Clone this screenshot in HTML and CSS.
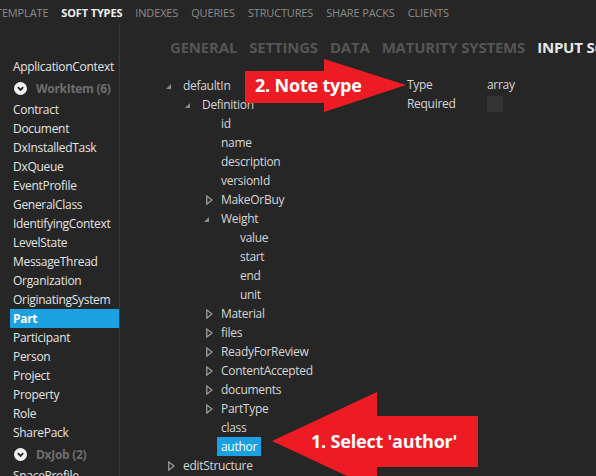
FILE: index.html
```html
<!DOCTYPE html>
<html>
<head>
<meta charset="utf-8">
<link rel="stylesheet" href="styles.css">
</head>
<body>
<div class="app">
  <nav class="topnav">
    <span class="tn">TEMPLATE</span>
    <span class="tn active">SOFT TYPES</span>
    <span class="tn">INDEXES</span>
    <span class="tn">QUERIES</span>
    <span class="tn">STRUCTURES</span>
    <span class="tn">SHARE PACKS</span>
    <span class="tn">CLIENTS</span>
  </nav>
  <div class="main">
    <aside class="sidebar">
      <div class="si">ApplicationContext</div>
      <div class="group"><span class="gicon"><svg width="13" height="13" viewBox="0 0 13 13"><circle cx="6.5" cy="6.5" r="6.5" fill="#f2f2f2"/><path d="M3.8 5.2 L6.5 7.9 L9.2 5.2" fill="none" stroke="#262626" stroke-width="1.8"/></svg></span>WorkItem (6)</div>
      <div class="si">Contract</div>
      <div class="si">Document</div>
      <div class="si">DxInstalledTask</div>
      <div class="si">DxQueue</div>
      <div class="si">EventProfile</div>
      <div class="si">GeneralClass</div>
      <div class="si">IdentifyingContext</div>
      <div class="si">LevelState</div>
      <div class="si">MessageThread</div>
      <div class="si">Organization</div>
      <div class="si">OriginatingSystem</div>
      <div class="si selected">Part</div>
      <div class="si">Participant</div>
      <div class="si">Person</div>
      <div class="si">Project</div>
      <div class="si">Property</div>
      <div class="si">Role</div>
      <div class="si">SharePack</div>
      <div class="group"><span class="gicon"><svg width="13" height="13" viewBox="0 0 13 13"><circle cx="6.5" cy="6.5" r="6.5" fill="#f2f2f2"/><path d="M3.8 5.2 L6.5 7.9 L9.2 5.2" fill="none" stroke="#262626" stroke-width="1.8"/></svg></span>DxJob (2)</div>
      <div class="si">SpaceProfile</div>
    </aside>
    <section class="content">
      <nav class="subnav">
        <span class="sn">GENERAL</span>
        <span class="sn">SETTINGS</span>
        <span class="sn">DATA</span>
        <span class="sn">MATURITY SYSTEMS</span>
        <span class="sn active">INPUT SCHEMA</span>
      </nav>
      <div class="body">
        <div class="tree">
          <div class="row l0"><span class="tg exp"><svg width="5" height="5" viewBox="0 0 5 5"><polygon points="5,0 5,5 0,5" fill="#8a8a8a"/></svg></span><span class="lb">defaultIn</span></div>
          <div class="row l1"><span class="tg exp"><svg width="5" height="5" viewBox="0 0 5 5"><polygon points="5,0 5,5 0,5" fill="#8a8a8a"/></svg></span><span class="lb">Definition</span></div>
          <div class="row l2"><span class="tg"></span><span class="lb">id</span></div>
          <div class="row l2"><span class="tg"></span><span class="lb">name</span></div>
          <div class="row l2"><span class="tg"></span><span class="lb">description</span></div>
          <div class="row l2"><span class="tg"></span><span class="lb">versionId</span></div>
          <div class="row l2"><span class="tg col"><svg width="7" height="10" viewBox="0 0 7 10"><path d="M0.75 0.9 L6 5 L0.75 9.1 Z" fill="none" stroke="#9a9a9a" stroke-width="1.3"/></svg></span><span class="lb">MakeOrBuy</span></div>
          <div class="row l2"><span class="tg exp"><svg width="5" height="5" viewBox="0 0 5 5"><polygon points="5,0 5,5 0,5" fill="#8a8a8a"/></svg></span><span class="lb">Weight</span></div>
          <div class="row l3"><span class="tg"></span><span class="lb">value</span></div>
          <div class="row l3"><span class="tg"></span><span class="lb">start</span></div>
          <div class="row l3"><span class="tg"></span><span class="lb">end</span></div>
          <div class="row l3"><span class="tg"></span><span class="lb">unit</span></div>
          <div class="row l2"><span class="tg col"><svg width="7" height="10" viewBox="0 0 7 10"><path d="M0.75 0.9 L6 5 L0.75 9.1 Z" fill="none" stroke="#9a9a9a" stroke-width="1.3"/></svg></span><span class="lb">Material</span></div>
          <div class="row l2"><span class="tg col"><svg width="7" height="10" viewBox="0 0 7 10"><path d="M0.75 0.9 L6 5 L0.75 9.1 Z" fill="none" stroke="#9a9a9a" stroke-width="1.3"/></svg></span><span class="lb">files</span></div>
          <div class="row l2"><span class="tg col"><svg width="7" height="10" viewBox="0 0 7 10"><path d="M0.75 0.9 L6 5 L0.75 9.1 Z" fill="none" stroke="#9a9a9a" stroke-width="1.3"/></svg></span><span class="lb">ReadyForReview</span></div>
          <div class="row l2"><span class="tg col"><svg width="7" height="10" viewBox="0 0 7 10"><path d="M0.75 0.9 L6 5 L0.75 9.1 Z" fill="none" stroke="#9a9a9a" stroke-width="1.3"/></svg></span><span class="lb">ContentAccepted</span></div>
          <div class="row l2"><span class="tg col"><svg width="7" height="10" viewBox="0 0 7 10"><path d="M0.75 0.9 L6 5 L0.75 9.1 Z" fill="none" stroke="#9a9a9a" stroke-width="1.3"/></svg></span><span class="lb">documents</span></div>
          <div class="row l2"><span class="tg col"><svg width="7" height="10" viewBox="0 0 7 10"><path d="M0.75 0.9 L6 5 L0.75 9.1 Z" fill="none" stroke="#9a9a9a" stroke-width="1.3"/></svg></span><span class="lb">PartType</span></div>
          <div class="row l2"><span class="tg"></span><span class="lb">class</span></div>
          <div class="row l2"><span class="tg"></span><span class="lb sel">author</span></div>
          <div class="row l0"><span class="tg col"><svg width="7" height="10" viewBox="0 0 7 10"><path d="M0.75 0.9 L6 5 L0.75 9.1 Z" fill="none" stroke="#9a9a9a" stroke-width="1.3"/></svg></span><span class="lb">editStructure</span></div>
        </div>
        <div class="props">
          <div class="pk">Type</div><div class="pv">array</div>
          <div class="pk">Required</div><div class="pv"><span class="chk"></span></div>
        </div>
      </div>
    </section>
  </div>
  <div class="overlay">
    <svg width="596" height="476" viewBox="0 0 596 476">
      <polygon points="245,71 324,71 324,59 406,85 324,112 324,103 245,103" fill="#ed1c24"/>
      <polygon points="272,441 377,392 377,416 478,416 478,467 377,467 377,490" fill="#ed1c24"/>
    </svg>
    <span class="callout c2">2. Note type</span>
    <span class="callout c1">1. Select 'author'</span>
  </div>
</div>
</body>
</html>
```
FILE: styles.css
```css
* { box-sizing: border-box; }
html, body { margin: 0; padding: 0; }
body {
  background: #262626;
  font-family: "Open Sans", "Noto Sans", sans-serif;
  color: #dcdcdc;
  width: 596px;
  height: 476px;
  overflow: hidden;
}
.app { position: relative; width: 596px; height: 476px; overflow: hidden; }
.topnav {
  height: 24px;
  display: flex;
  align-items: center;
  gap: 13px;
  margin-left: -4px;
  font-size: 11px;
  color: #8c8c8c;
  white-space: nowrap;
  letter-spacing: -0.15px;
}
.topnav .active { color: #f0f0f0; font-weight: 700; }
.main { display: flex; height: 452px; }
.sidebar {
  width: 120px;
  flex: none;
  border-right: 1px solid #3a3a3a;
  padding-top: 33px;
  padding-left: 10px;
  font-size: 12px;
  letter-spacing: -0.3px;
  color: #e4e4e4;
  white-space: nowrap;
  overflow: hidden;
}
.si { height: 19px; line-height: 19px; padding-left: 3px; }
.si.selected { background: #1ba1e2; color: #fff; font-weight: 700; }
.group {
  height: 24px;
  display: flex;
  align-items: center;
  gap: 9px;
  padding-left: 4px;
  font-weight: 700;
  color: #6e6e6e;
}
.gicon { display: flex; }
.content { flex: 1; min-width: 0; }
.subnav {
  height: 34px;
  display: flex;
  align-items: center;
  gap: 12px;
  padding-left: 50px;
  padding-top: 11px;
  font-size: 15px;
  font-weight: 700;
  color: #555555;
  white-space: nowrap;
  letter-spacing: -0.2px;
}
.subnav .active { color: #e8e8e8; }
.body { display: flex; padding-top: 18px; }
.tree { width: 287px; flex: none; font-size: 12px; letter-spacing: -0.3px; color: #d6d6d6; white-space: nowrap; }
.row { height: 19px; display: flex; align-items: center; }
.l0 { padding-left: 46px; }
.l1 { padding-left: 65px; }
.l2 { padding-left: 84px; }
.l3 { padding-left: 103px; }
.tg { width: 13px; flex: none; display: flex; align-items: center; }
.tg.exp { padding-top: 1px; }
.tg.col { padding-left: 2px; }
.lb { padding: 0 4px; line-height: 19px; }
.lb.sel { background: #1ba1e2; color: #fff; }
.props {
  display: grid;
  grid-template-columns: 80px auto;
  grid-auto-rows: 19px;
  align-items: center;
  font-size: 12px;
  letter-spacing: -0.3px;
  color: #d6d6d6;
  align-content: start;
  margin-top: -1px;
}
.chk { display: block; width: 16px; height: 16px; background: #333333; }
.overlay { position: absolute; left: 0; top: 0; width: 596px; height: 476px; pointer-events: none; }
.overlay svg { position: absolute; left: 0; top: 0; }
.callout {
  position: absolute;
  color: #fff;
  font-weight: 700;
  font-size: 18px;
  line-height: 20px;
  white-space: nowrap;
  letter-spacing: -0.2px;
}
.c2 { left: 255px; top: 75px; }
.c1 { left: 311px; top: 431px; }
```
